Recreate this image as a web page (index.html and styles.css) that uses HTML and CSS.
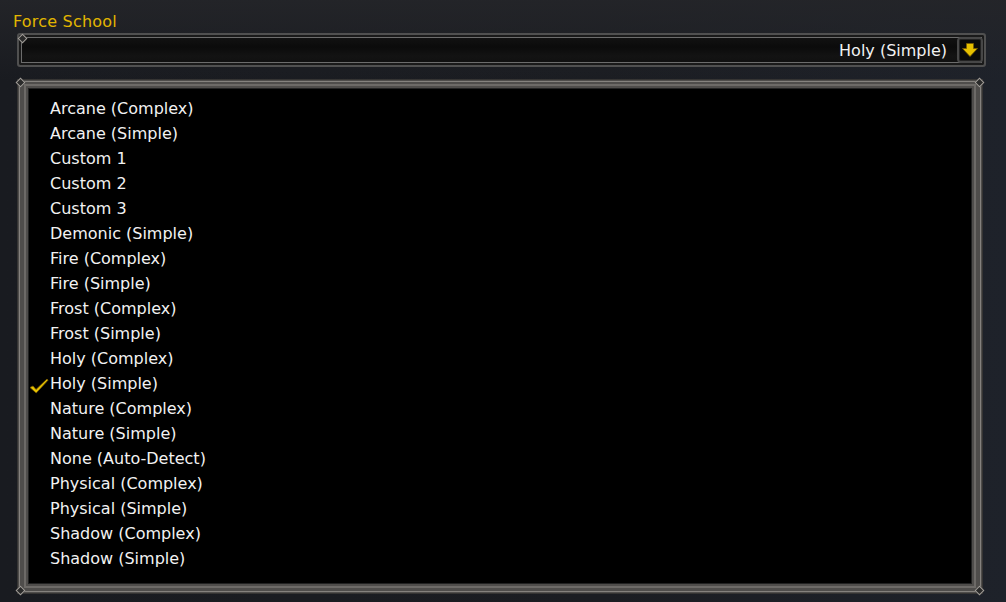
FILE: index.html
```html
<!DOCTYPE html>
<html lang="en">
<head>
    <meta charset="UTF-8">
    <title>Force School</title>
    <link rel="stylesheet" href="styles.css">
</head>
<body>
    <div class="frame">
        <div class="field-label">Force School</div>

        <div class="select">
            <span class="stud stud-select"></span>
            <span class="select-value">Holy (Simple)</span>
            <button class="select-button" type="button" aria-label="Open">
                <svg width="16" height="14" viewBox="0 0 16 14">
                    <path d="M4.5 0.5h7v5h4L8 13.5 0.5 5.5h4z" fill="#e6c000" stroke="#7a5e00" stroke-width="0.8"/>
                </svg>
            </button>
        </div>

        <div class="menu">
            <span class="stud stud-tl"></span>
            <span class="stud stud-tr"></span>
            <span class="stud stud-bl"></span>
            <span class="stud stud-br"></span>
            <ul class="menu-list" id="menuList"></ul>
        </div>
    </div>

    <script>
        const schools = [
            'Arcane (Complex)', 'Arcane (Simple)', 'Custom 1', 'Custom 2', 'Custom 3',
            'Demonic (Simple)', 'Fire (Complex)', 'Fire (Simple)', 'Frost (Complex)',
            'Frost (Simple)', 'Holy (Complex)', 'Holy (Simple)', 'Nature (Complex)',
            'Nature (Simple)', 'None (Auto-Detect)', 'Physical (Complex)',
            'Physical (Simple)', 'Shadow (Complex)', 'Shadow (Simple)'
        ];
        const selected = 'Holy (Simple)';
        const list = document.getElementById('menuList');

        schools.forEach(function(name) {
            const li = document.createElement('li');
            li.className = 'menu-item';
            const check = document.createElement('span');
            check.className = 'check';
            if (name === selected) {
                // little gold tick in the gutter
                check.innerHTML = '<svg width="20" height="16" viewBox="0 0 20 16"><path d="M1 9.5l3-1.5 3 3.5L18 1l1 1.2L7.2 15z" fill="#e8c400" stroke="#7a5c00" stroke-width="0.8" stroke-linejoin="round"/></svg>';
            }
            const text = document.createElement('span');
            text.textContent = name;
            li.appendChild(check);
            li.appendChild(text);
            list.appendChild(li);
        });
    </script>
</body>
</html>
```

FILE: styles.css
```css
:root {
    --gold: #e2b600;
    --text: #f2f2f2;
    --rail: #4f4d4b;
    --rail-light: #85827e;
    --rail-dark: #353433;
}

html, body {
    height: 100%;
}

body {
    margin: 0;
    background:
        linear-gradient(180deg, rgba(36, 37, 41, 0.9) 0, rgba(28, 29, 33, 0) 80px),
        linear-gradient(90deg, #191b20 0, #1b1d22 60%, #1e222a 100%);
    font-family: 'DejaVu Sans', sans-serif;
    overflow: hidden;
}

.frame {
    padding: 12px 0 0 13px;
    width: 973px;
}

.field-label {
    color: var(--gold);
    font-size: 16px;
    line-height: 20px;
    height: 20px;
    letter-spacing: 0.2px;
}

/* the closed dropdown bar */
.select {
    position: relative;
    margin: 1px 0 0 4px;
    width: 969px;
    height: 34px;
    box-sizing: border-box;
    border: 2px solid #505050;
    border-radius: 3px;
    background:
        linear-gradient(180deg, #141414 0, #0b0b0b 40%, #131313 70%, #0f0f0f 100%);
    box-shadow:
        inset 0 0 0 2px #1a1a1a,
        inset 0 0 0 3px #6c6c6c;
    display: flex;
    align-items: center;
    justify-content: flex-end;
    padding-right: 1px;
}

.select-value {
    color: var(--text);
    font-size: 16px;
    margin-right: 10px;
}

.select-button {
    width: 26px;
    height: 26px;
    padding: 0;
    border: 2px solid #474747;
    border-radius: 4px;
    background: #0a0a0a;
    box-shadow: inset 0 0 0 1px #222;
    display: flex;
    align-items: center;
    justify-content: center;
}

.select-button svg {
    display: block;
}

/* the open list */
.menu {
    position: relative;
    margin: 13px 0 0 5px;
    width: 964px;
    box-sizing: border-box;
    border-style: solid;
    border-width: 8px 10px 9px 10px;
    border-color: var(--rail);
    background: #000;
    box-shadow:
        0 0 0 1px var(--rail-dark),
        inset 0 0 0 1px #222;
}

.menu::before {
    content: '';
    position: absolute;
    left: -9px;
    right: -9px;
    top: -7px;
    bottom: -8px;
    border: 1px solid var(--rail-light);
    pointer-events: none;
}

.menu::after {
    content: '';
    position: absolute;
    left: -4px;
    right: -4px;
    top: -4px;
    bottom: -4px;
    border: 2px solid #6d6a67;
    pointer-events: none;
}

.stud {
    position: absolute;
    width: 5px;
    height: 5px;
    background: #2a2a2a;
    border: 1px solid #a29e99;
    transform: rotate(45deg);
    z-index: 1;
}

.stud-select { left: 0; top: 0; }
.stud-tl { left: -11px; top: -9px; }
.stud-tr { right: -11px; top: -9px; }
.stud-bl { left: -11px; bottom: -10px; }
.stud-br { right: -11px; bottom: -10px; }

.menu-list {
    list-style: none;
    margin: 0;
    padding: 8px 0 13px 0;
}

.menu-item {
    display: flex;
    align-items: center;
    height: 25px;
    color: var(--text);
    font-size: 16px;
    line-height: 25px;
}

.check {
    width: 22px;
    flex: none;
    display: flex;
    align-items: center;
    padding-left: 1px;
    box-sizing: border-box;
}

.check svg {
    display: block;
    margin-top: 5px;
}
```
